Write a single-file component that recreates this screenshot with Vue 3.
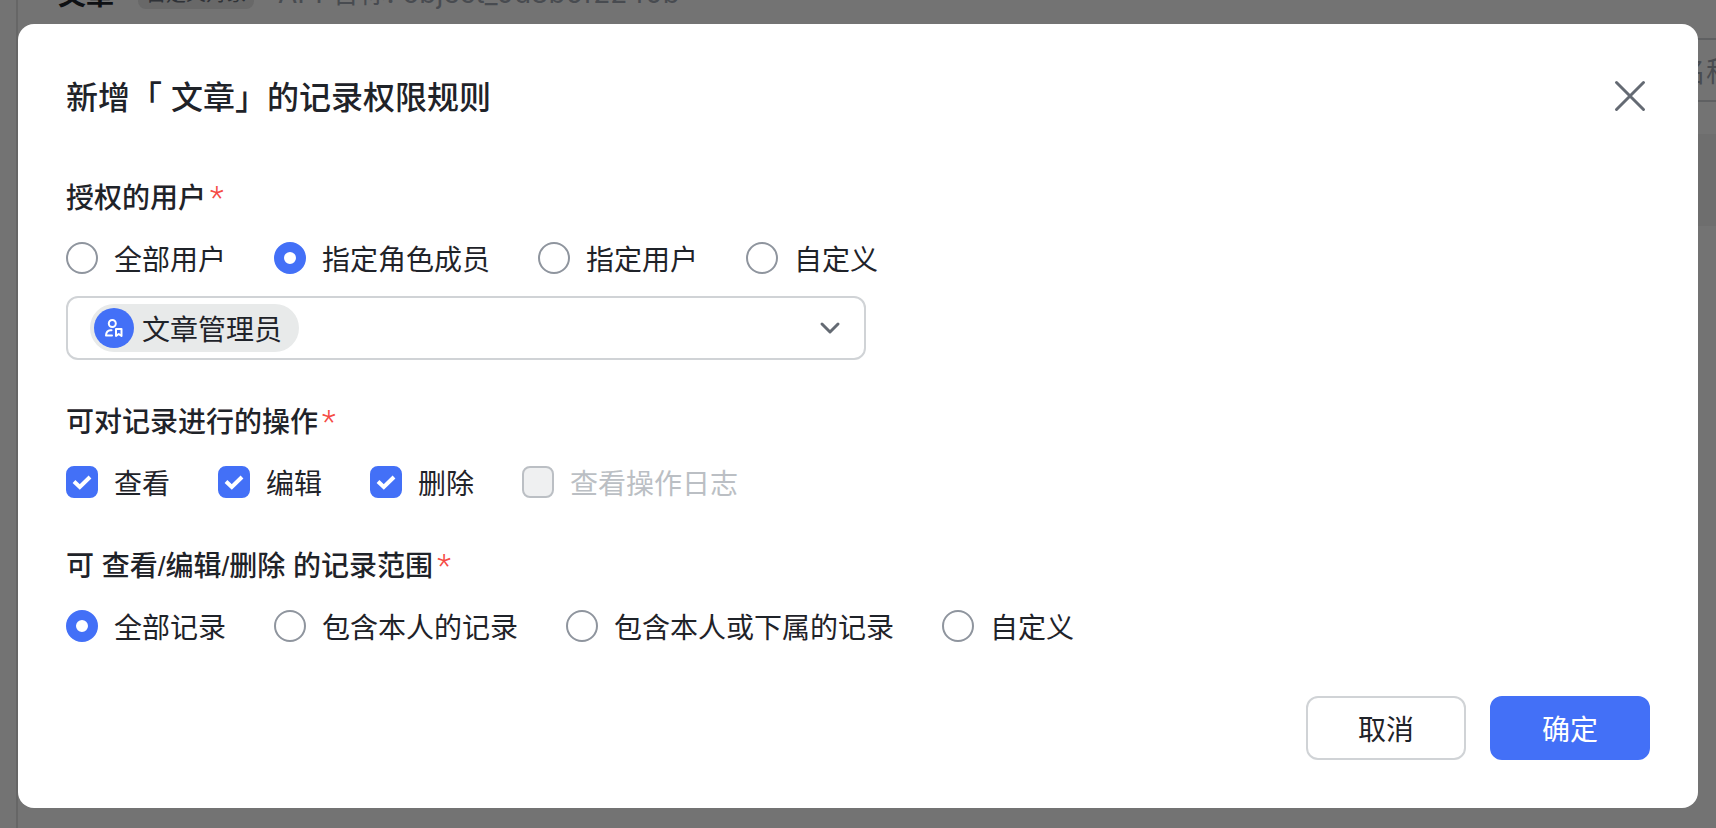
<script setup>
import { ref } from 'vue'

const user = ref('role')
const range = ref('all')
const role = ref('文章管理员')

const userOptions = [
  { value: 'all', label: '全部用户' },
  { value: 'role', label: '指定角色成员' },
  { value: 'user', label: '指定用户' },
  { value: 'custom', label: '自定义' },
]
const actions = ref([
  { label: '查看', checked: true },
  { label: '编辑', checked: true },
  { label: '删除', checked: true },
  { label: '查看操作日志', checked: false, disabled: true },
])
const rangeOptions = [
  { value: 'all', label: '全部记录' },
  { value: 'own', label: '包含本人的记录' },
  { value: 'sub', label: '包含本人或下属的记录' },
  { value: 'custom', label: '自定义' },
]
</script>

<template>
  <div class="page">
    <div class="backdrop" aria-hidden="true">
      <div class="page-head">
        <strong class="page-title">文章</strong>
        <span class="page-tag">自定义对象</span>
        <span class="page-api">API 名称: object_0d8b6f2240b</span>
      </div>
      <div class="page-search">名称</div>
      <div class="page-band"></div>
    </div>

    <section class="modal" role="dialog" aria-modal="true" aria-labelledby="dialog-title">
      <header class="modal-head">
        <h1 id="dialog-title">新增「 文章」的记录权限规则</h1>
        <button class="close" type="button" aria-label="关闭">
          <svg viewBox="0 0 40 40" width="40" height="40">
            <path d="M6.500 6.500L33.500 33.500M33.500 6.500L6.500 33.500" />
          </svg>
        </button>
      </header>

      <fieldset class="group users">
        <legend>授权的用户<span class="star">*</span></legend>
        <div class="options">
          <label v-for="o in userOptions" :key="o.value" class="option">
            <input v-model="user" type="radio" name="user" :value="o.value" />
            <span>{{ o.label }}</span>
          </label>
        </div>
        <div class="picker">
          <svg class="avatar" viewBox="0 0 40 40" width="40" height="40" aria-hidden="true">
            <circle cx="20" cy="20" r="20" fill="#4370f7" />
            <g fill="none" stroke="#fff" stroke-width="2" stroke-linecap="round" stroke-linejoin="round">
              <circle cx="18.300" cy="15.500" r="3.500" />
              <path d="M17.500 22.200H16.500Q12.200 22.500 12 27.500H18" />
              <path d="M22 21H27.500V28L24.700 26L22 28Z" />
            </g>
          </svg>
          <select v-model="role" aria-label="角色">
            <option>文章管理员</option>
          </select>
          <svg class="arrow" viewBox="0 0 24 24" width="24" height="24" aria-hidden="true">
            <path d="M4 8L12 16L20 8" />
          </svg>
        </div>
      </fieldset>

      <fieldset class="group">
        <legend>可对记录进行的操作<span class="star">*</span></legend>
        <div class="options">
          <label v-for="a in actions" :key="a.label" class="option" :class="{ disabled: a.disabled }">
            <span class="box">
              <input v-model="a.checked" type="checkbox" :disabled="a.disabled" />
              <svg v-if="a.checked" viewBox="0 0 32 32" width="32" height="32" aria-hidden="true">
                <path d="M8 15.500L13.800 21L24 11" />
              </svg>
            </span>
            <span>{{ a.label }}</span>
          </label>
        </div>
      </fieldset>

      <fieldset class="group">
        <legend>可 查看/编辑/删除 的记录范围<span class="star">*</span></legend>
        <div class="options">
          <label v-for="o in rangeOptions" :key="o.value" class="option">
            <input v-model="range" type="radio" name="range" :value="o.value" />
            <span>{{ o.label }}</span>
          </label>
        </div>
      </fieldset>

      <footer class="modal-foot">
        <button class="btn" type="button">取消</button>
        <button class="btn primary" type="button">确定</button>
      </footer>
    </section>
  </div>
</template>

<style>
body {
  margin: 0;
  background: #737373;
}
</style>

<style scoped>
.page {
  position: relative;
  box-sizing: border-box;
  min-height: 100vh;
  padding: 24px 18px 20px;
  overflow: hidden;
  color: #1f2329;
  font-family: "Noto Sans CJK SC", sans-serif;
  font-size: 28px;
  line-height: 40px;
}
.backdrop {
  position: absolute;
  inset: 0 0 0 16px;
  border-left: 2px solid #666;
}
.page-head {
  position: absolute;
  top: -28px;
  left: 40px;
  display: flex;
  align-items: center;
  gap: 24px;
  white-space: nowrap;
}
.page-title {
  color: #0e1013;
}
.page-tag {
  padding: 0 8px;
  border-radius: 8px;
  background: #686868;
  color: #2f3237;
  font-size: 20px;
  line-height: 32px;
}
.page-api {
  color: #484b50;
  font-family: Inter, "Noto Sans CJK SC", sans-serif;
  line-height: 42px;
}
.page-search {
  position: absolute;
  top: 38px;
  right: -32px;
  width: 160px;
  padding: 10px 12px 10px 0;
  border: 2px solid #5f6062;
  color: #484b50;
  text-align: right;
}
.page-band {
  position: absolute;
  top: 134px;
  right: 0;
  width: 160px;
  height: 92px;
  background: #6e6e6e;
}
.modal {
  position: relative;
  padding: 48px;
  border-radius: 16px;
  background: #fff;
}
.modal-head {
  display: flex;
  align-items: center;
  justify-content: space-between;
  margin-bottom: 54px;
}
h1,
legend {
  font-family: "Liberation Sans", "Noto Sans CJK SC", sans-serif;
  font-weight: 500;
}
h1 {
  height: 48px;
  margin: 0;
  font-size: 32px;
  line-height: 52px;
}
.close {
  width: 40px;
  height: 40px;
  padding: 0;
  border: 0;
  background: none;
}
.close svg,
.arrow,
.box svg {
  display: block;
  fill: none;
  stroke: #646a73;
  stroke-width: 3;
  stroke-linecap: round;
  stroke-linejoin: round;
}
.group {
  min-width: 0;
  margin: 0 0 40px;
  padding: 0;
  border: 0;
}
.users {
  margin-bottom: 38px;
}
legend {
  display: block;
  height: 44px;
  margin-bottom: 20px;
  padding: 0;
  line-height: 50px;
}
.star {
  margin-left: 4px;
  color: #f54a45;
  font-family: Roboto, sans-serif;
  font-size: 32px;
  font-weight: 300;
  line-height: 32px;
}
.options {
  display: flex;
  flex-wrap: wrap;
  gap: 16px 48px;
}
.option {
  display: flex;
  align-items: center;
  gap: 16px;
}
input {
  appearance: none;
  display: block;
  box-sizing: border-box;
  width: 32px;
  height: 32px;
  margin: 0;
  border: 2px solid #8f959e;
  border-radius: 50%;
  background: #fff;
}
input[type="radio"]:checked {
  border: 10px solid #4370f7;
}
input[type="checkbox"] {
  border-radius: 8px;
}
input[type="checkbox"]:checked {
  border-color: #4370f7;
  background: #4370f7;
}
input[type="checkbox"]:disabled {
  border-color: #bbbfc4;
  background: #eff0f1;
}
.disabled {
  color: #bbbfc4;
}
.box {
  position: relative;
}
.box svg {
  position: absolute;
  inset: 0;
  stroke: #fff;
  stroke-width: 4;
  stroke-linecap: butt;
  stroke-linejoin: miter;
  pointer-events: none;
}
.picker {
  position: relative;
  display: flex;
  align-items: center;
  box-sizing: border-box;
  max-width: 800px;
  height: 64px;
  margin-top: 18px;
  padding: 0 22px;
  border: 2px solid #d0d3d6;
  border-radius: 12px;
}
.avatar {
  position: absolute;
  left: 26px;
  pointer-events: none;
}
select {
  appearance: none;
  height: 48px;
  padding: 0 16px 0 52px;
  border: 0;
  border-radius: 24px;
  background: #e8eaea;
  color: inherit;
  font: inherit;
}
.arrow {
  margin-left: auto;
}
.modal-foot {
  display: flex;
  justify-content: flex-end;
  gap: 24px;
  margin-top: 50px;
}
.btn {
  width: 160px;
  height: 64px;
  padding: 0;
  border: 2px solid #d0d3d6;
  border-radius: 12px;
  background: #fff;
  color: inherit;
  font: inherit;
}
.primary {
  border-color: #4370f7;
  background: #4370f7;
  color: #fff;
}
</style>
